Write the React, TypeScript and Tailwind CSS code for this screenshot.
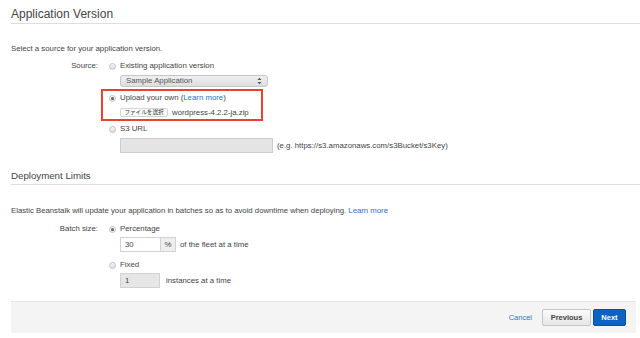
import React from "react";

function Radio({ checked }: { checked?: boolean }) {
  return (
    <span className="w-[7px] h-[7px] rounded-full border border-[#c2c2c2] bg-gradient-to-b from-[#f6f6f6] to-[#dedede] flex items-center justify-center shrink-0">
      {checked && <span className="w-[3px] h-[3px] rounded-full bg-[#666]" />}
    </span>
  );
}

function RadioRow({ label, checked, children }: { label: string; checked?: boolean; children?: React.ReactNode }) {
  return (
    <div className="flex items-center h-[10px] leading-[10px]">
      <div className="w-[109px] flex items-center">
        {label ? <span className="w-[98px] text-right">{label}</span> : null}
      </div>
      <Radio checked={checked} />
      <span className="ml-[4px]">{children}</span>
    </div>
  );
}

export default function App() {
  return (
    <div className="w-[640px] h-[338px] bg-white overflow-hidden text-[#444] font-['Liberation_Sans',Arial,sans-serif] text-[7.8px]">
      <div className="ml-[11px] h-[24px] border-b border-[#dedede] pt-[6px] text-[12px] leading-[16px] text-[#444]">
        Application Version
      </div>
      <div className="mt-[20px] ml-[11px] h-[10px] leading-[10px]">Select a source for your application version.</div>

      <div className="mt-[7px]">
        <RadioRow label="Source:">Existing application version</RadioRow>
      </div>
      <div className="mt-[4px] ml-[120px] w-[148px] h-[12px] rounded-[3px] border border-[#c6c6c6] bg-gradient-to-b from-[#f0f0f0] to-[#dedede] flex items-center justify-between px-[5px] text-[#555]">
        <span className="leading-[10px]">Sample Application</span>
        <svg width="5" height="8" viewBox="0 0 5 8">
          <path d="M0.5 3 L2.5 0.8 L4.5 3 Z" fill="#555" />
          <path d="M0.5 5 L2.5 7.2 L4.5 5 Z" fill="#555" />
        </svg>
      </div>

      <div className="mt-[2px] ml-[101px] w-[162px] h-[32px] border-2 border-[#e8432c] pt-[2px]">
        <div className="flex items-center h-[10px] leading-[10px] pl-[6px]">
          <Radio checked />
          <span className="ml-[4px]">
            Upload your own (<span className="text-[#1f6fd1]">Learn more</span>)
          </span>
        </div>
        <div className="mt-[5px] ml-[17px] flex items-center h-[9px]">
          <span className="h-[9px] w-[48px] border border-[#d4d4d4] rounded-[2px] bg-[#fafafa] flex items-center justify-center text-[5.6px] leading-[7px] text-[#333] font-['Noto_Sans_CJK_JP','Liberation_Sans',sans-serif] whitespace-nowrap overflow-hidden">
            ファイルを選択
          </span>
          <span className="ml-[4px] leading-[10px]">wordpress-4.2.2-ja.zip</span>
        </div>
      </div>

      <div className="mt-[3px]">
        <RadioRow label="">S3 URL</RadioRow>
      </div>
      <div className="mt-[4px] ml-[120px] flex items-center">
        <div className="w-[153px] h-[15px] border border-[#cdcdcd] bg-[#e4e4e4]" />
        <span className="ml-[4px] leading-[10px]">(e.g. https://s3.amazonaws.com/s3Bucket/s3Key)</span>
      </div>

      <div className="mt-[17px] ml-[11px] h-[15px] border-b border-[#dedede] text-[9.7px] leading-[12px]">
        Deployment Limits
      </div>
      <div className="mt-[21px] ml-[11px] h-[10px] leading-[10px] text-[7.75px]">
        Elastic Beanstalk will update your application in batches so as to avoid downtime when deploying.{" "}
        <span className="text-[#1f6fd1]">Learn more</span>
      </div>

      <div className="mt-[8px]">
        <RadioRow label="Batch size:" checked>Percentage</RadioRow>
      </div>
      <div className="mt-[3px] ml-[120px] flex items-center">
        <div className="w-[41px] h-[15px] border border-[#d2d2d2] bg-white flex items-center pl-[4px] leading-[10px]">30</div>
        <div className="w-[15px] h-[15px] border border-l-0 border-[#d2d2d2] bg-[#eeeeee] flex items-center justify-center leading-[10px]">%</div>
        <span className="ml-[4px] leading-[10px]">of the fleet at a time</span>
      </div>

      <div className="mt-[8px]">
        <RadioRow label="">Fixed</RadioRow>
      </div>
      <div className="mt-[3px] ml-[120px] flex items-center">
        <div className="w-[40px] h-[15px] border border-[#d2d2d2] bg-[#e6e6e6] flex items-center pl-[4px] leading-[10px]">1</div>
        <span className="ml-[6px] leading-[10px]">instances at a time</span>
      </div>

      <div className="mt-[13px] ml-[11px] mr-[4px] h-[32px] border-t border-[#e4e4e4] bg-[#f4f4f4] flex items-center justify-end pr-[10px]">
        <span className="text-[#2f74c9] text-[7.5px] leading-[10px] mr-[10px]">Cancel</span>
        <span className="w-[49px] h-[17px] rounded-[2px] border border-[#c4c4c4] bg-gradient-to-b from-[#fbfbfb] to-[#e6e6e6] flex items-center justify-center font-bold text-[7.5px] text-[#444]">
          Previous
        </span>
        <span className="ml-[2px] w-[33px] h-[17px] rounded-[2px] border border-[#0a4f9e] bg-[#0d62c2] flex items-center justify-center font-bold text-[7.5px] text-white">
          Next
        </span>
      </div>
    </div>
  );
}
